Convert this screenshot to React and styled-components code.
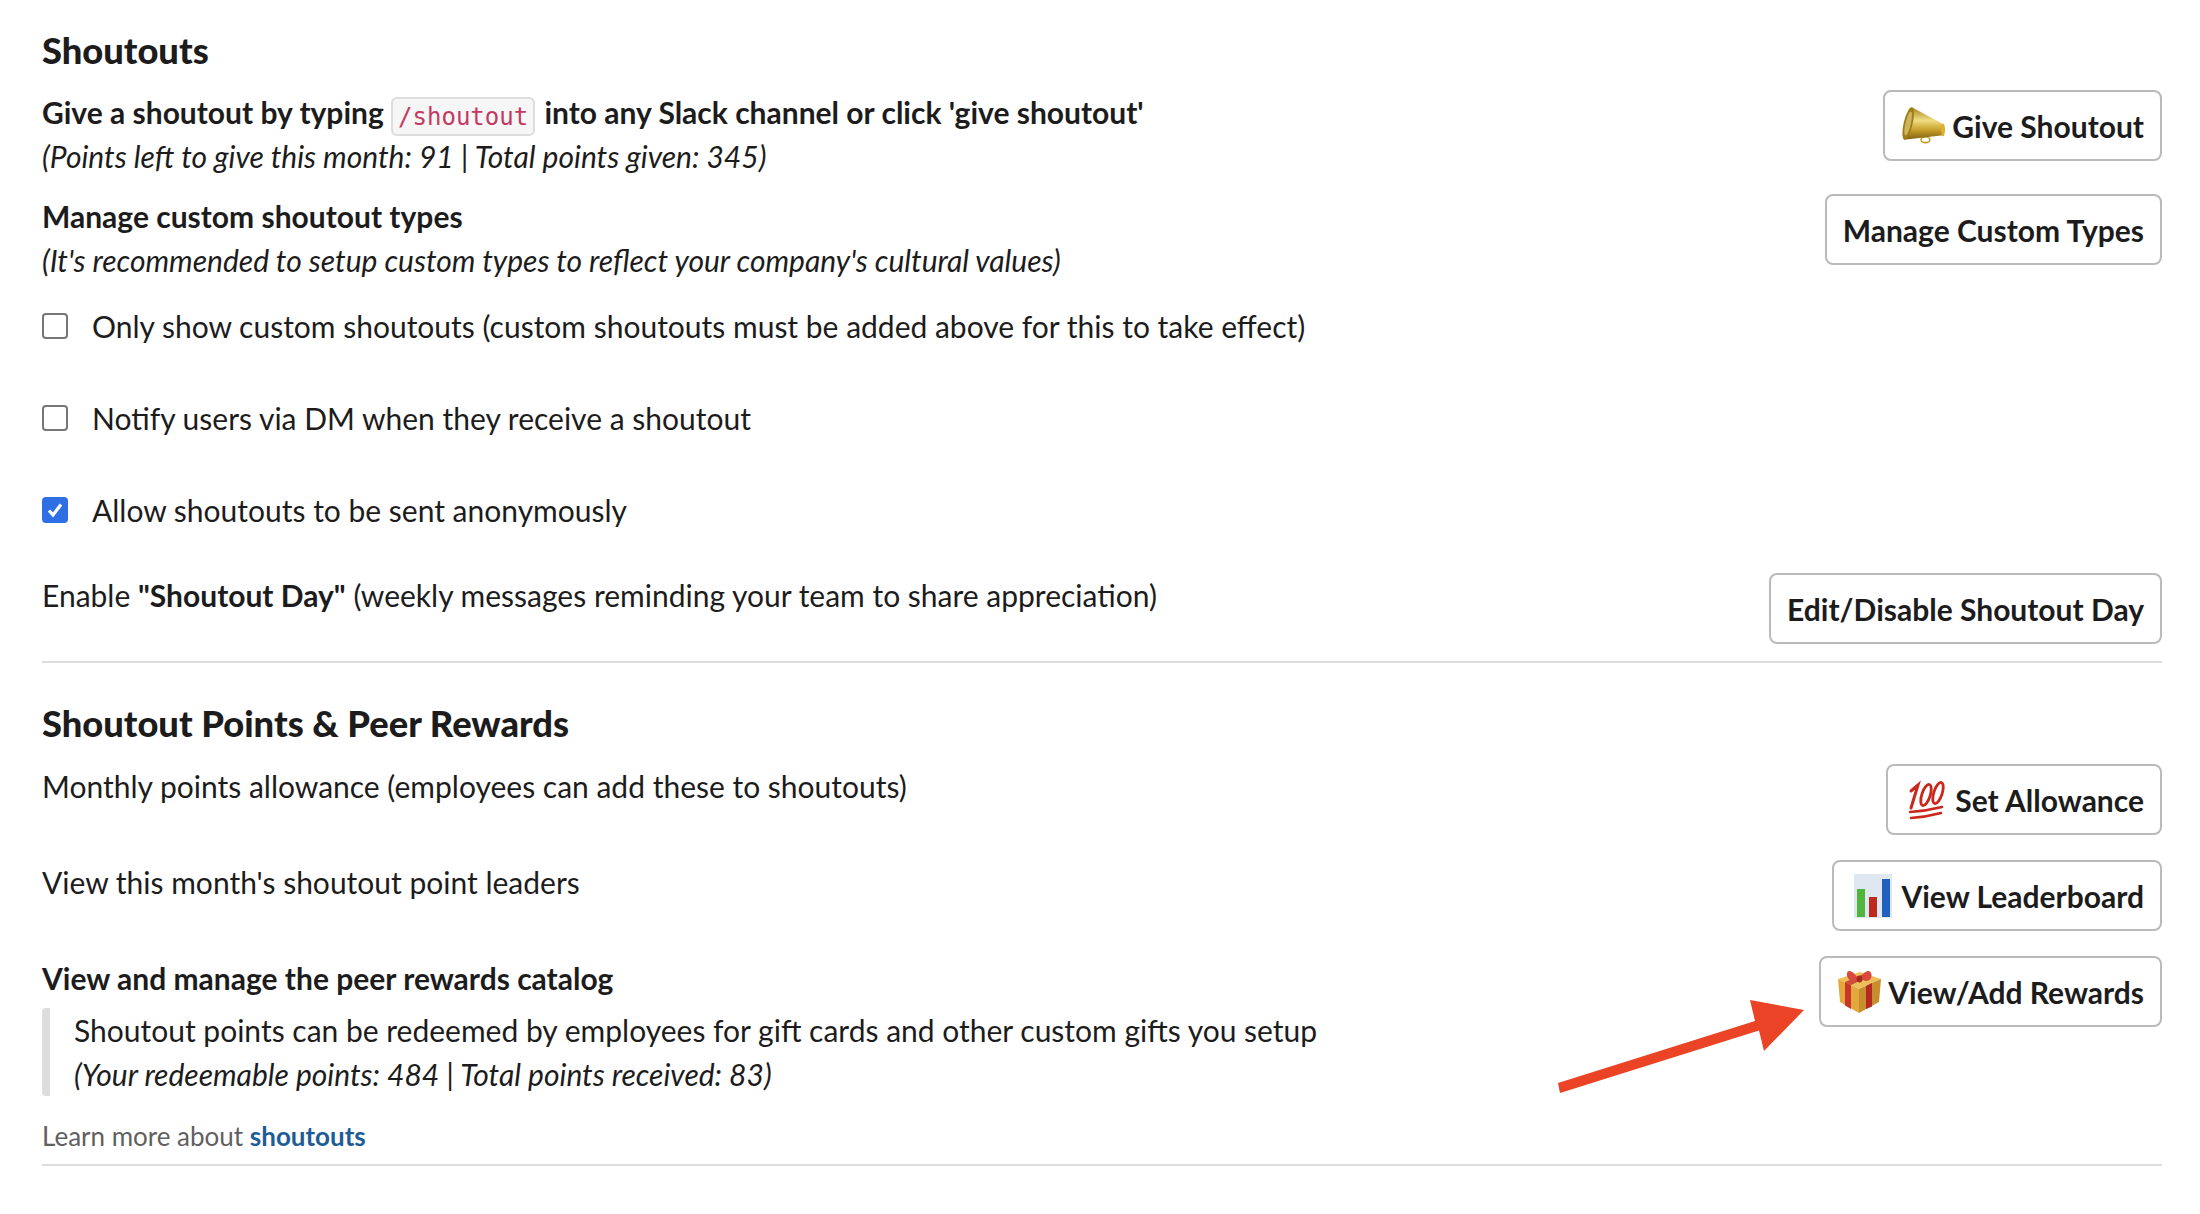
import React from 'react'
import styled, { createGlobalStyle } from 'styled-components'

const GlobalStyle = createGlobalStyle`
  html, body { margin: 0; padding: 0; background: #fff; }
  body { font-family: Lato, "Open Sans", "Liberation Sans", sans-serif; color: #1d1c1d; }
`

function Megaphone() {
  return (
    <svg viewBox="0 0 46 40" width="46" height="40">
      <defs>
        <linearGradient id="gold" x1="0" y1="0" x2="0" y2="1">
          <stop offset="0" stopColor="#a8841c" />
          <stop offset="0.4" stopColor="#efdc82" />
          <stop offset="0.7" stopColor="#c9a02a" />
          <stop offset="1" stopColor="#7d5f10" />
        </linearGradient>
      </defs>
      <ellipse cx="25" cy="34" rx="4.5" ry="3" fill="none" stroke="#c49a24" strokeWidth="1.6" />
      <path d="M11.6 1 L43 18 L43 29.5 L3 34 Z" fill="url(#gold)" />
      <ellipse cx="7.3" cy="17.5" rx="4.6" ry="17" transform="rotate(13 7.3 17.5)" fill="#a07c16" />
      <ellipse cx="7.3" cy="17.5" rx="2.8" ry="12.5" transform="rotate(13 7.3 17.5)" fill="#cdb45e" />
      <ellipse cx="43" cy="24" rx="2" ry="6.5" fill="#dcb02c" />
    </svg>
  )
}

function Hundred() {
  return (
    <svg viewBox="0 0 38 40" width="38" height="40">
      <g fill="none" stroke="#c9281c" strokeLinecap="round">
        <path d="M3 11 L10 5 L3 28" strokeWidth="3" />
        <ellipse cx="18" cy="15" rx="4.2" ry="11" transform="rotate(18 18 15)" strokeWidth="2.8" />
        <ellipse cx="30" cy="13" rx="4.2" ry="11" transform="rotate(18 30 13)" strokeWidth="2.8" />
        <path d="M2 32 Q18 31 34 27" strokeWidth="2.6" />
        <path d="M3 38 Q18 37 33 33" strokeWidth="2.6" />
      </g>
    </svg>
  )
}

function BarChart() {
  return (
    <svg viewBox="0 0 38 44" width="38" height="44">
      <rect x="0" y="0" width="38" height="44" fill="#dfe8f0" />
      <rect x="3" y="15" width="8" height="28" fill="#4fb53c" />
      <rect x="15" y="23" width="8" height="20" fill="#bb2a1c" />
      <rect x="28" y="5" width="8" height="38" fill="#2160bd" />
    </svg>
  )
}

function Gift() {
  return (
    <svg viewBox="0 0 44 46" width="44" height="46">
      <path d="M0 10 L22 3 L43 10 L21 20 Z" fill="#efc05a" />
      <path d="M0 10 L21 20 L21 44 L2 33 Z" fill="#e2a83c" />
      <path d="M43 10 L21 20 L21 44 L41 33 Z" fill="#c68e2c" />
      <path d="M7 13 L13 16 L13 40 L7 36.5 Z" fill="#c8362a" />
      <path d="M28 17 L34 14 L34 37.5 L28 40 Z" fill="#b52a20" />
      <path d="M7 13 L13 16 L34 6 L28 4 Z" fill="#cf4a38" />
      <path d="M20 9 C15 2 10 0 9 4 C8 10 14 14 20 11 L25 11 C30 14 35 10 33 4 C32 0 26 2 22 9 Z" fill="#d8493f" />
      <ellipse cx="21.5" cy="10" rx="3" ry="3.4" fill="#a82a20" />
    </svg>
  )
}

function App() {
  return (
    <Page>
      <GlobalStyle />
      <Title>Shoutouts</Title>
      <Row>
        <RowText>
          <StrongLine>
            Give a shoutout by typing <Code>/shoutout</Code> into any Slack channel or click 'give shoutout'
          </StrongLine>
          <Note>(Points left to give this month: 91 | Total points given: 345)</Note>
        </RowText>
        <Button><Emoji><Megaphone /></Emoji>Give Shoutout</Button>
      </Row>
      <Row $top={16}>
        <RowText>
          <StrongLine>Manage custom shoutout types</StrongLine>
          <Note>(It's recommended to setup custom types to reflect your company's cultural values)</Note>
        </RowText>
        <Button>Manage Custom Types</Button>
      </Row>
      <Checks>
        <CheckRow>
          <Box />
          Only show custom shoutouts (custom shoutouts must be added above for this to take effect)
        </CheckRow>
        <CheckRow>
          <Box />
          Notify users via DM when they receive a shoutout
        </CheckRow>
        <CheckRow>
          <Box $checked>
            <svg viewBox="0 0 26 26" width="26" height="26">
              <path d="M7 13.5 L11 18 L19 7.5" fill="none" stroke="#fff" strokeWidth="3.2" />
            </svg>
          </Box>
          Allow shoutouts to be sent anonymously
        </CheckRow>
      </Checks>
      <Row $top={41}>
        <div>Enable <b>"Shoutout Day"</b> (weekly messages reminding your team to share appreciation)</div>
        <Button>Edit/Disable Shoutout Day</Button>
      </Row>
      <Divider $top={17} />
      <Title $top={39}>Shoutout Points &amp; Peer Rewards</Title>
      <Row $top={20}>
        <div>Monthly points allowance (employees can add these to shoutouts)</div>
        <Button><Emoji><Hundred /></Emoji>Set Allowance</Button>
      </Row>
      <Row $top={25}>
        <div>View this month's shoutout point leaders</div>
        <Button><Emoji><BarChart /></Emoji>View Leaderboard</Button>
      </Row>
      <RewardsRow>
        <RowText>
          <StrongLine>View and manage the peer rewards catalog</StrongLine>
          <Quote>
            <div>Shoutout points can be redeemed by employees for gift cards and other custom gifts you setup</div>
            <Note>(Your redeemable points: 484 | Total points received: 83)</Note>
          </Quote>
        </RowText>
        <Button><Emoji><Gift /></Emoji>View/Add Rewards</Button>
        <Arrow viewBox="0 0 260 100" width="260" height="100">
          <path d="M4 98 L2 88 L199 26 L194 5 L248 15 L208 56 L203 35.5 Z" fill="#ea4325" />
        </Arrow>
      </RewardsRow>
      <LearnMore>Learn more about <a href="#shoutouts">shoutouts</a></LearnMore>
      <Divider $top={9} />
    </Page>
  )
}

export default App

const Page = styled.div`
  padding: 29px 38px 0 42px;
  font-size: 30px;
  line-height: 44px;
`
const Title = styled.h2`
  margin: ${p => p.$top || 0}px 0 0;
  font-size: 36.3px;
  line-height: 42px;
  font-weight: 900;
`
const Row = styled.div`
  display: flex;
  justify-content: space-between;
  align-items: flex-start;
  margin-top: ${p => p.$top || 19}px;
`
const RewardsRow = styled(Row)`
  position: relative;
  margin-top: 25px;
`
const RowText = styled.div`
  display: flex;
  flex-direction: column;
`
const StrongLine = styled.div`
  font-weight: 700;
`
const Note = styled.div`
  font-style: italic;
`
const Code = styled.code`
  margin-right: 2px;
  padding: 3.5px 5px;
  border: 2px solid #dddddd;
  border-radius: 6px;
  background: #f6f6f6;
  color: #c23a62;
  font-family: "DejaVu Sans Mono", monospace;
  font-size: 24px;
  line-height: 1;
  font-weight: 400;
`
const Button = styled.button`
  display: inline-flex;
  align-items: center;
  flex-shrink: 0;
  height: 71px;
  padding: 0 16px;
  border: 2px solid #bbbabb;
  border-radius: 8px;
  background: #fff;
  color: #1d1c1d;
  font-family: inherit;
  font-size: 30px;
  font-weight: 700;
`
const Emoji = styled.span`
  display: inline-flex;
  justify-content: center;
  width: 45px;
  margin-right: 6px;
`
const Checks = styled.div`
  display: flex;
  flex-direction: column;
  gap: 48px;
  margin-top: 22px;
`
const CheckRow = styled.label`
  display: flex;
  align-items: center;
  gap: 24px;
`
const Box = styled.span`
  display: inline-flex;
  width: 26px;
  height: 26px;
  box-sizing: border-box;
  flex-shrink: 0;
  border: ${p => (p.$checked ? 'none' : '2px solid #767676')};
  border-radius: 4px;
  background: ${p => (p.$checked ? '#2f6fe4' : '#fff')};
`
const Divider = styled.hr`
  margin: ${p => p.$top || 0}px 0 0;
  border: none;
  height: 2px;
  background: #dddddd;
`
const Quote = styled.div`
  margin-top: 8px;
  padding-left: 24px;
  border-left: 8px solid #dddddd;
  border-radius: 4px;
`
const Arrow = styled.svg`
  position: absolute;
  right: 346px;
  top: 39px;
`
const LearnMore = styled.div`
  margin-top: 21px;
  font-size: 26px;
  line-height: 38px;
  color: #616061;
  a {
    color: #1d5c96;
    font-weight: 700;
    text-decoration: none;
  }
`
